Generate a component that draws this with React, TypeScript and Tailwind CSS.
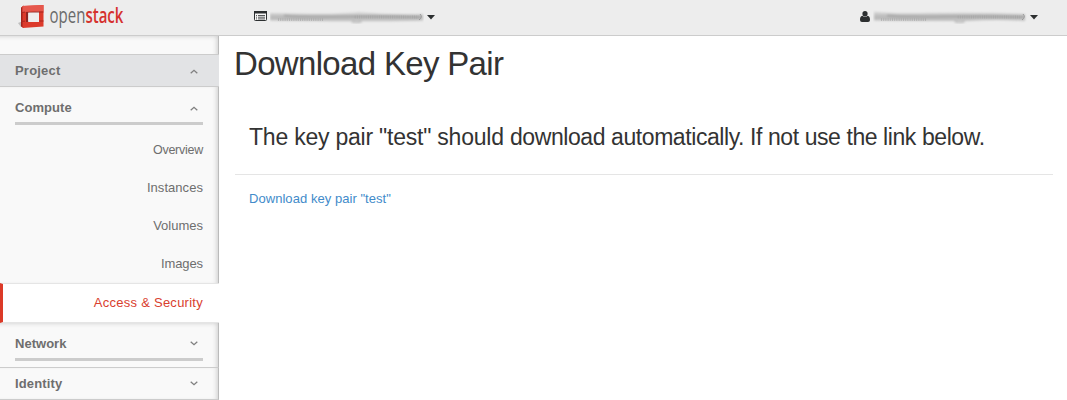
import React from "react";

function Chevron({ up = false, className = "" }: { up?: boolean; className?: string }) {
  return (
    <svg width="8" height="5" viewBox="0 0 8 5" className={className} fill="none" stroke="#808080" strokeWidth="1.3">
      <path d={up ? "M.7 4.300 4 1.300l3.300 3" : "M.7.7 4 3.700 7.300.7"} />
    </svg>
  );
}

function Caret() {
  return (
    <svg width="8" height="5" viewBox="0 0 8 5" fill="#2c2f30">
      <path d="M0 0h8L4 4.500z" />
    </svg>
  );
}

function Logo() {
  return (
    <svg width="120" height="34" viewBox="0 0 120 34" className="block">
      <path d="M3 23l5-2v6l-2 0z" fill="#aaa" opacity=".7" />
      <path d="M6 7.500 9 5.500V28l-3-1.500z" fill="#a3231c" />
      <path fillRule="evenodd" d="M7.500 6 28.500 5v21.500L7.500 28zM12.500 12.500V22H24V11.500z" fill="#dc3a2b" />
      <path d="M7.500 6 28.500 5v6.200L7.500 12z" fill="#e6574c" />
      <path d="M11 12 24.500 11.400v1.300H13.300V22H11z" fill="#8e2420" />
      <path d="M6 12.600l4-.5M6 21.500l4-.4M24.500 12h4M24.500 21h4" stroke="#a82720" strokeWidth="1" />
      <path d="M13.300 12.600H24v9H13.300z" fill="#f0eeee" />
      <text transform="translate(34.600 22.600) scale(.682 1)" fontSize="22" fill="#6a6a6a" className="font-['Open_Sans',sans-serif]">
        open<tspan fill="#d5322e" fontWeight="600">stack</tspan>
      </text>
    </svg>
  );
}

function Smudge({ id, d, w }: { id: string; d: string; w: number }) {
  return (
    <svg width={w} height="16" viewBox={`0 0 ${w} 16`} className="block">
      <defs>
        <linearGradient id={id} x2="0" y2="1">
          <stop offset="0" stopColor="#dcdcdc" />
          <stop offset=".55" stopColor="#b8b8b8" />
          <stop offset="1" stopColor="#c4c4c4" />
        </linearGradient>
        <filter id={id + "f"}><feGaussianBlur stdDeviation=".8" /></filter>
        <filter id={id + "g"}><feGaussianBlur stdDeviation=".35" /></filter>
      </defs>
      <g filter={`url(#${id}f)`}>
        <path d={d} fill={`url(#${id})`} />
        <path d={`M14 6.500C${w * 0.3} 10 ${w * 0.6} 5 ${w - 5} 8`} fill="none" stroke="#a4a4a4" strokeWidth="1.8" />
        <path d={`M${w * 0.53} 12.800q5 1 10 0`} fill="none" stroke="#999" />
      </g>
      <g filter={`url(#${id}g)`}>
        <path d={`M8 10.800H${w * 0.35}M${w * 0.55} 8H${w - 3}`} stroke="#a3a3a3" strokeWidth="3" strokeDasharray="1 1.200" opacity=".6" />
        <path d={`M${w - 4} 5q3 3-1 6`} fill="none" stroke="#999" />
      </g>
    </svg>
  );
}

const items = [
  { name: "Overview", spacing: "tracking-[-0.25px] text-[12.5px]" },
  { name: "Instances", spacing: "tracking-[0.05px]" },
  { name: "Volumes", spacing: "tracking-[0px]" },
  { name: "Images", spacing: "tracking-[-0.1px]" },
];

export default function App() {
  return (
    <div className="flex h-[400px] w-[1067px] flex-col overflow-hidden bg-white font-['Liberation_Sans',Arial,sans-serif] text-[13px] text-[#333]">
      <header className="flex h-9 shrink-0 border-b border-[#ccc] bg-[#ededed]">
        <div className="w-[254px] pl-[15px]">
          <Logo />
        </div>
        <div className="flex flex-1 items-start">
          <svg width="13" height="10" viewBox="0 0 13 10" className="mt-[11px]">
            <rect x=".5" y=".5" width="12" height="9" rx=".8" fill="#f7f7f7" stroke="#2c2f30" />
            <path d="M0 0h13v2.500H0z" fill="#2c2f30" />
            <path d="M2 4.500h1M4 4.500h7M2 6.200h1M4 6.200h7M2 7.900h1M4 7.900h7" stroke="#2c2f30" strokeWidth=".8" />
          </svg>
          <div className="ml-[3px] mt-[9px]">
            <Smudge id="tenant" w={154} d="M0 4Q70 6 88 3Q120 6 153 5V11.500Q110 13 0 11.500Z" />
          </div>
          <div className="ml-[3px] mt-[15px]"><Caret /></div>
        </div>
        <div className="flex w-[207px] items-start">
          <svg width="10" height="11" viewBox="0 0 10 11" className="mt-[11px]" fill="#2c2f30">
            <ellipse cx="5" cy="2.800" rx="2.600" ry="2.800" />
            <path d="M2.400 4.700C.7 5 0 6.500 0 9q0 2 2 2h6q2 0 2-2C10 6.500 9.300 5 7.600 4.700 6 6.400 4 6.400 2.400 4.700Z" />
          </svg>
          <div className="ml-[3px] mt-[9px]">
            <Smudge id="user" w={154} d="M1 2.500Q20 5 55 4Q110 3 152 5V12Q125 10 95 12Q55 12 1 11.500Z" />
          </div>
          <div className="ml-[3px] mt-[15px]"><Caret /></div>
        </div>
      </header>
      <div className="flex min-h-0 flex-1">
        <aside className="w-[219px] shrink-0 bg-[#f9f9f9] text-[#6e6e6e]">
          <div className="h-[18px] border-r border-[#bbb] shadow-[inset_-4px_3px_5px_-3px_#ccc]" />
          <div className="flex h-[33px] items-center justify-between border-y border-[#ccc] bg-[#e2e3e5] pl-[15px] pr-[21px] font-bold tracking-[0.2px]">
            <span>Project</span>
            <Chevron up className="mt-px" />
          </div>
          <div className="h-[196px] border-r border-[#bbb] pl-[15px] pr-[15px] shadow-[inset_-4px_0_5px_-3px_#ccc]">
            <div className="flex h-[38px] items-center justify-between border-b-3 border-[#ccc] pr-[5px] pt-[6px] font-bold tracking-[0.07px]">
              <span>Compute</span>
              <Chevron up className="mt-px" />
            </div>
            <ul className="pt-[6px] text-right">
              {items.map((item) => (
                <li key={item.name} className={`h-[38px] leading-[38px] ${item.spacing}`}>{item.name}</li>
              ))}
            </ul>
          </div>
          <div className="h-10 border-y border-l-3 border-y-[#e5e5e5] border-l-[#dc3a28] bg-white pr-4 text-right leading-[38px] tracking-[0.26px] text-[#d9402e]">
            Access &amp; Security
          </div>
          <div className="h-[45px] border-b border-r border-b-[#ccc] border-r-[#bbb] px-[15px] shadow-[inset_-4px_3px_5px_-3px_#ccc]">
            <div className="flex h-[38px] items-center justify-between border-b-3 border-[#ccc] pr-[5px] pt-[6px] font-bold tracking-[0.02px]">
              <span>Network</span>
              <Chevron />
            </div>
          </div>
          <div className="flex h-8 items-center justify-between border-b border-r border-b-[#ccc] border-r-[#bbb] pl-[15px] pr-5 font-bold tracking-[0.15px] shadow-[inset_-4px_0_5px_-3px_#ccc]">
            <span>Identity</span>
            <Chevron />
          </div>
        </aside>
        <main className="flex-1 pl-4 pr-[14px]">
          <h1 className="-ml-px mt-[9px] whitespace-nowrap text-[33px] leading-[38px] tracking-[-0.67px]">Download Key Pair</h1>
          <div className="mt-[31px] h-[61px] border-b border-[#e5e5e5] pl-[14px]">
            <h3 className="whitespace-nowrap pt-[10px] text-[23px] leading-[26px] tracking-[-0.42px]">
              <span className="tracking-[-0.22px]">The key pair "test" should </span>
              download automatically. If not use the link below.
            </h3>
          </div>
          <a className="ml-[14px] mt-[14px] block whitespace-nowrap leading-5 tracking-[0.05px] text-[#428bca]" href="#">Download key pair "test"</a>
        </main>
      </div>
    </div>
  );
}
